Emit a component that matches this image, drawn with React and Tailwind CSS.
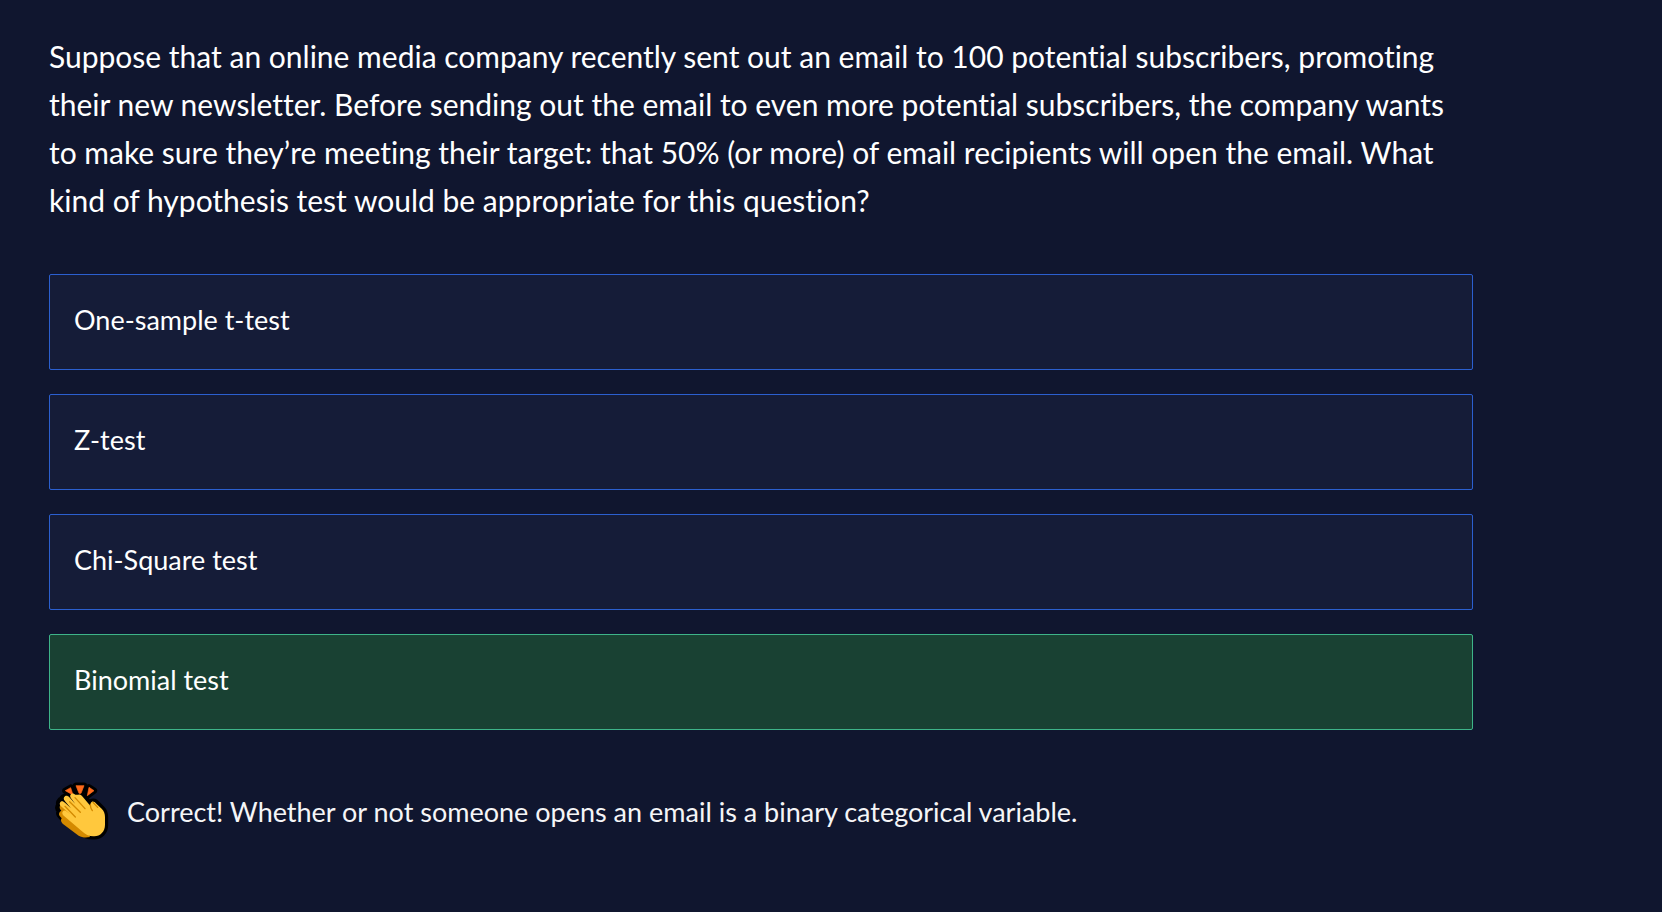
import { useState } from "react";

const options = ["One-sample t-test", "Z-test", "Chi-Square test", "Binomial test"];
const answer = "Binomial test";

function ClappingHands() {
  return (
    <svg viewBox="45 33 162 177" className="h-[59px] w-[54px] shrink-0" aria-hidden="true">
      <g fill="#000" stroke="#000" strokeWidth="19" strokeLinejoin="round">
        <path d="M76 59 92 50 99 72ZM108 44h24l-9 23h-6ZM147 49l15 10-20 15Z" />
        <path d="M114 71c6-3 10 1 13 5l22 22 6-5c5-3 11 0 14 4l17 17c7 7 9 14 9 24v24c0 21-14 33-33 34-17 1-28-3-40-13l-57-45c-6-5-10-12-5-18-7-5-7-13-1-18-4-6-1-15 8-17 1-7 9-9 16-5 2-8 10-9 16-5 3-4 9-7 15-4Z" />
      </g>
      <path fill="#ff6a1a" stroke="#ff6a1a" strokeWidth="2" strokeLinejoin="round" d="M76 59 92 50 99 72ZM108 44h24l-9 23h-6ZM147 49l15 10-20 15Z" />
      <path fill="#d48a00" d="M68 97c-8 3-11 11-8 17l4 5c-7 3-9 11-5 16l6 7c-4 5-2 11 3 16l48 36c10 6 22 6 34 4l-8-18-52-62Z" />
      <path fill="#ffc83d" d="M115 71c6-2 10 2 13 6l24 29c-1-7-1-12 4-14 5-1 9 2 13 6l16 15c7 7 10 15 10 25v23c0 21-14 34-32 35-15 1-26-5-38-16l-52-44c-5-5-8-10-5-14 3-5 8-4 13 0l10 8-28-24c-5-5-5-11-1-14 4-3 9-1 13 3l18 17-18-21c-5-6-5-12 0-15 4-3 9-1 13 3l18 20-13-17c-4-6-3-12 2-14 4-2 7 0 11 3Z" />
      <g fill="none" stroke="#d48a00" strokeWidth="4" strokeLinecap="round">
        <path d="m105 80 30 33M89 92l32 32M75 106l31 32M159 94l14 15M151 101c0 6 2 12 6 18" />
      </g>
    </svg>
  );
}

export default function App() {
  const [selected, setSelected] = useState(answer);

  return (
    <main className="min-h-screen bg-[#10162f] px-[49px] py-8 font-['Lato',sans-serif] text-white [font-variant-ligatures:none]">
      <div className="max-w-[1424px]">
        <p className="text-[30px] leading-[48px]">
          Suppose that an online media company recently sent out an email to 100 potential
          subscribers, promoting their new newsletter. Before sending out the email to even more
          potential subscribers, the company wants to make sure they’re meeting their target: that
          50% (or more) of email recipients will open the email. What kind of hypothesis test would
          be appropriate for this question?
        </p>

        <div className="mt-[50px] flex flex-col gap-6">
          {options.map((option) => {
            const correct = option === selected && option === answer;
            return (
              <button
                key={option}
                type="button"
                aria-pressed={option === selected}
                onClick={() => setSelected(option)}
                className={`w-full rounded-xs border px-6 pt-[25px] pb-[29px] text-left text-[27px] leading-10 ${
                  correct ? "border-[#3eb489] bg-[#194133]" : "border-[#2b5fcf] bg-[#151c38]"
                }`}
              >
                {option}
              </button>
            );
          })}
        </div>

        {selected === answer && (
          <div role="status" className="mt-[52px] flex items-center gap-[18px] pl-[6px]">
            <ClappingHands />
            <p className="text-[27px] leading-10 text-[#f5f5f7]">
              Correct! Whether or not someone opens an email is a binary categorical variable.
            </p>
          </div>
        )}
      </div>
    </main>
  );
}
